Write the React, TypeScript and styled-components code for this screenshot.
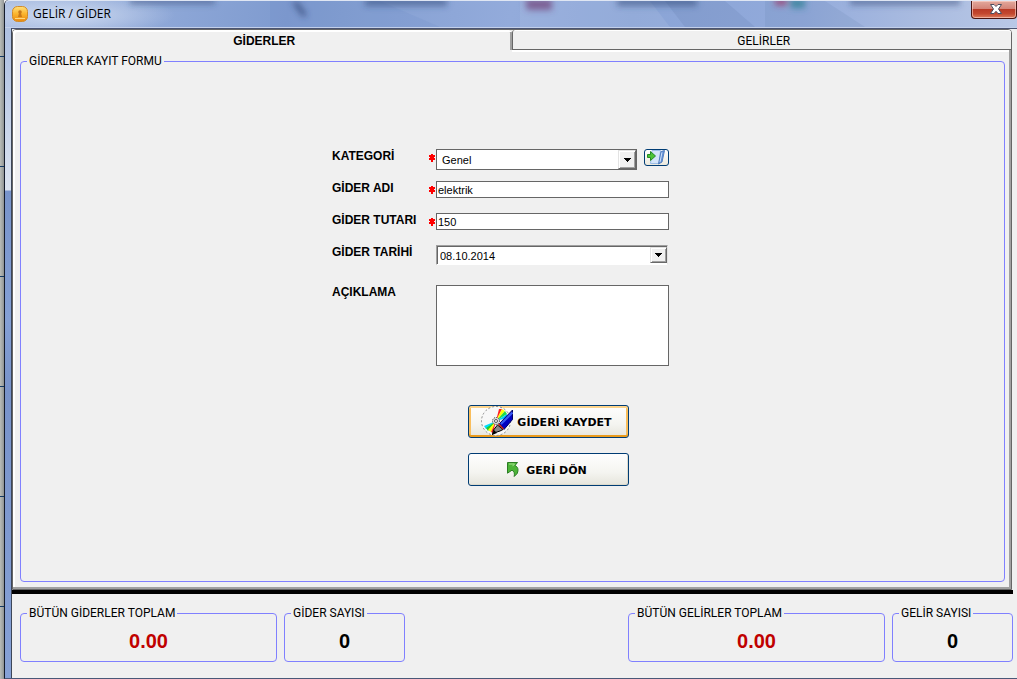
import React from "react";
import styled, { createGlobalStyle } from "styled-components";

const face = "#f0f0f0";
const frame = "#666666";
const shade = "#a0a0a0";
const violet = "#8080ff";
const ui = `Roboto, "Liberation Sans", sans-serif`;
const sans = `"Liberation Sans", Arial, sans-serif`;

const GlobalStyle = createGlobalStyle`
  *, *::before, *::after { box-sizing: border-box; }
  body { margin: 0; background: ${face}; color: #000; font: 12px/16px ${ui}; }
  button, input, select, textarea { font: inherit; color: inherit; margin: 0; }
`;

const Desktop = styled.div`
  display: flex;
  min-height: 100vh;
`;

const Backdrop = styled.div`
  flex: 0 0 4px;
  background:
    repeating-linear-gradient(180deg, transparent 0 56px, #123a66 56px 57px, transparent 57px 110px),
    linear-gradient(90deg, #b9bdb9, #a2a6a4 60%, #8d908f);
`;

const Window = styled.main`
  flex: 1;
  min-width: 0;
  display: flex;
  flex-direction: column;
  border-left: 1px solid #141c2c;
  border-bottom: 1px solid #4a5878;
  border-top-left-radius: 5px;
  background: linear-gradient(180deg, #a9bddf 0, #b4c5e4 60px, #dbe3f0 190px, #7894cb 191px, #84a0d5 320px, #7893ca 390px, #86a1d6 100%);
`;

const TitleBar = styled.header`
  position: relative;
  display: flex;
  align-items: flex-start;
  height: 28px;
  border-top: 1px solid #dfe6f3;
  border-bottom: 1px solid #c3d0ea;
  border-top-left-radius: 5px;
  background:
    radial-gradient(ellipse 110px 22px at 60px 14px, rgba(215, 226, 245, 0.85), transparent),
    linear-gradient(100deg, #a5b9de 0, #8ba5d6 18%, #7f9bcf 28%, #93abdb 50%, #8aa4d6 62%, #92aadb 78%, #a9bbe0 90%, #b9c8e6 100%);
  overflow: hidden;
`;

const Reflections = styled.svg`
  position: absolute;
  inset: 0;
  width: 100%;
  height: 100%;
`;

const Title = styled.h1`
  position: relative;
  flex: 1;
  display: flex;
  align-items: center;
  gap: 5px;
  margin: 0;
  padding: 4px 0 0 7px;
  font: 400 12px/18px "Open Sans", "Noto Sans", sans-serif;
`;

const CloseButton = styled.button`
  position: relative;
  display: flex;
  align-items: center;
  justify-content: center;
  width: 46px;
  height: 18px;
  padding: 0 0 2px 3px;
  border: 1px solid #4a1512;
  border-top: 0;
  border-radius: 0 0 4px 4px;
  background: linear-gradient(180deg, #e3a99d 0, #d48478 45%, #b93a26 50%, #c4482f 75%, #dd7c5c 100%);
  box-shadow: inset 0 0 0 1px rgba(255, 215, 205, 0.6);
`;

const Client = styled.div`
  flex: 1;
  display: flex;
  flex-direction: column;
  margin-left: 6px;
  border-left: 1px solid #3d4658;
  border-top: 1px solid #4a5472;
  background: ${face};
`;

const TabControl = styled.section`
  flex: 1;
  display: flex;
  flex-direction: column;
  margin-right: 5px;
  border: 1px solid ${frame};
  border-radius: 4px 4px 0 0;
`;

const Tabs = styled.div`
  display: flex;
`;

const Tab = styled.button<{ $active?: boolean }>`
  flex: 1;
  height: 20px;
  padding: 2px 0 0 4px;
  border: 0 solid ${frame};
  border-width: ${(p) => (p.$active ? "0" : "0 0 1px 1px")};
  border-radius: 3px 3px 0 0;
  background: ${face};
  font: ${(p) => (p.$active ? `700 12px/18px ${sans}` : `400 12px/18px ${ui}`)};
  box-shadow: ${(p) =>
    p.$active
      ? `inset 2px 2px 0 #fff, inset -2px 0 0 ${shade}`
      : "inset 0 1px 0 #fff, 0 2px 0 #fff"};
`;

const Pane = styled.div`
  flex: 1;
  display: flex;
  padding: 4px 4px 5px 7px;
  border: solid ${shade};
  border-width: 0 2px 2px 0;
  box-shadow: inset 2px 0 0 #fff;
`;

const Group = styled.fieldset<{ $width?: number }>`
  flex: ${(p) => (p.$width ? `0 0 ${p.$width}px` : "1")};
  min-width: 0;
  margin: 0;
  padding: 0;
  border: 1px solid ${violet};
  border-radius: 4px;
`;

const Legend = styled.legend`
  margin-left: 6px;
  padding: 0 2px;
  line-height: 15px;
`;

const Form = styled.form`
  display: flex;
  flex-direction: column;
  align-items: center;
  padding: 79px 24px 0 0;
`;

const Fields = styled.div`
  display: grid;
  grid-template-columns: 97px 7px 233px;
  grid-template-rows: 32px 32px 32px 40px auto;
  align-items: start;
`;

const Label = styled.label`
  grid-column: 1;
  font: 700 12px/16px ${sans};
`;

const Star = styled.svg`
  grid-column: 2;
  width: 7px;
  height: 8px;
  margin-top: 6px;
`;

const Control = styled.div`
  grid-column: 3;
  display: flex;
  align-items: flex-start;
  justify-content: space-between;
  padding-top: 1px;
`;

const TextBox = styled.input`
  width: 100%;
  height: 17px;
  padding: 0 1px;
  border: 1px solid ${frame};
  border-radius: 0;
  background: #fff;
  font: 11px/15px ${sans};
  outline: 0;
`;

const Memo = styled.textarea`
  width: 100%;
  height: 81px;
  padding: 2px;
  border: 1px solid ${frame};
  border-radius: 0;
  background: #fff;
  font: 11px/15px ${sans};
  resize: none;
`;

const Combo = styled.div`
  display: flex;
  position: relative;
  width: 201px;
  height: 21px;
  border: 1px solid ${frame};
  background: #fff;
`;

const Select = styled.select`
  width: 100%;
  padding: 1px 5px 0;
  border: 0;
  appearance: none;
  background: transparent;
  font: 11px/18px ${sans};
  outline: 0;
`;

const DateBox = styled.div`
  display: flex;
  width: 232px;
  height: 20px;
  border: 1px solid;
  border-color: ${shade} #e3e3e3 #fff ${shade};
  background: #fff;
  box-shadow: inset 1px 1px 0 ${frame};
`;

const DateInput = styled.input`
  flex: 1;
  min-width: 0;
  padding: 1px 3px 0;
  border: 0;
  background: transparent;
  font: 11px/18px ${sans};
  outline: 0;
`;

const arrow = `
  border: 1px solid;
  border-color: #e3e3e3 #696969 #696969 #e3e3e3;
  background: ${face};
  box-shadow: inset 1px 1px 0 #fff, inset -1px -1px 0 ${shade};
  display: flex;
  align-items: center;
  justify-content: center;
`;

const ComboArrow = styled.span`
  ${arrow}
  position: absolute;
  inset: 0 0 0 auto;
  width: 18px;
  pointer-events: none;
`;

const DateArrow = styled.button`
  ${arrow}
  width: 17px;
  margin: 1px 0;
  padding: 0;
`;

const AddButton = styled.button`
  display: flex;
  justify-content: center;
  width: 25px;
  height: 17px;
  padding: 0;
  border: 1px solid #003c74;
  border-radius: 3px;
  background: linear-gradient(#fff, #ece9dd);
`;

const Actions = styled.div`
  display: flex;
  flex-direction: column;
  gap: 15px;
  margin: 39px 0 0 96px;
`;

const ActionButton = styled.button<{ $primary?: boolean }>`
  display: flex;
  align-items: center;
  justify-content: center;
  gap: ${(p) => (p.$primary ? 4 : 6)}px;
  width: 161px;
  height: 33px;
  padding: 0 4px 0 0;
  border: 1px solid #003c74;
  border-radius: 3px;
  background: linear-gradient(#fefefe, #f4f4f0 60%, #e6e5dc);
  font: 700 11px/16px "DejaVu Sans", Verdana, sans-serif;
  box-shadow: ${(p) =>
    p.$primary
      ? "inset 0 2px 0 #fdd48b, inset 0 -2px 0 #e89a1c, inset 2px 0 0 #f9be5c, inset -2px 0 0 #f9be5c"
      : "inset -1px -1px 0 #dcdacd"};
`;

const Caption = styled.span`
  padding-top: 2px;
`;

const Divider = styled.hr`
  height: 4px;
  margin: 0 4px 0 0;
  border: 0;
  background: #000;
`;

const Footer = styled.footer`
  display: flex;
  justify-content: space-between;
  padding: 12px 4px 16px 8px;
`;

const Totals = styled.div`
  display: flex;
  gap: 7px;
`;

const Value = styled.output<{ $money?: boolean }>`
  display: block;
  padding: 8px 0;
  text-align: center;
  font: 700 20px/24px ${sans};
  color: ${(p) => (p.$money ? "#c00000" : "#000")};
`;

const DownGlyph = () => (
  <svg width="7" height="4" viewBox="0 0 7 4" shapeRendering="crispEdges" aria-hidden>
    <path d="M0 0h7v1H6v1H5v1H4v1H3V3H2V2H1V1H0z" />
  </svg>
);

const Required = () => (
  <Star viewBox="0 0 7 8" shapeRendering="crispEdges" aria-hidden>
    <path d="M2 0h2v1h2v2H5v1h1v2H4v2H2V6H0V4h1V3H0V1h2z" fill="#f00" />
  </Star>
);

const AppIcon = () => (
  <svg width="16" height="16" viewBox="0 0 16 16" aria-hidden>
    <defs>
      <linearGradient id="amber" x1="0" y1="0" x2="0" y2="1">
        <stop offset="0" stopColor="#ffe07c" />
        <stop offset=".5" stopColor="#fbb42c" />
        <stop offset="1" stopColor="#e9890f" />
      </linearGradient>
    </defs>
    <rect x=".5" y=".5" width="15" height="15" rx="5" fill="url(#amber)" stroke="#d08c2c" />
    <circle cx="8" cy="6" r="1.8" fill="#c9791a" />
    <path d="M7 7h2l1 4H6z" fill="#c9791a" />
    <path d="M3 12.5h10" stroke="#ffd880" />
  </svg>
);

const FolderIcon = () => (
  <svg width="21" height="15" viewBox="0 0 21 15" aria-hidden>
    <path d="M6 .5h8.500l-1.500 13H4.500z" fill="#d4e5fa" stroke="#9cbde6" />
    <path d="M15 1.500l3.500-1-2.500 11.500-3.500 2z" fill="#5f8fd6" stroke="#5580c0" />
    <path d="M15.500 2.500l1-.3-2 9.500-1 .6z" fill="#d9e8fb" />
    <path d="M1.500 4.500h3V1.500L9.500 6l-5 4.500v-3h-3z" fill="#4cc436" stroke="#258a25" />
  </svg>
);

const DiscPenIcon = () => (
  <svg width="32" height="31" viewBox="0 0 32 31" aria-hidden>
    <circle cx="15" cy="15" r="14.5" fill="#f8f8f8" stroke="#888" strokeDasharray="2 2" />
    <path d="M15 15L18 3l3 0z" fill="#f22" />
    <path d="M15 15l6-12 3 2z" fill="#ff0" />
    <path d="M15 15l9-10 2 3z" fill="#2d4" />
    <path d="M15 15L26 8l0 4z" fill="#0cf" />
    <path d="M15 15L3 20l2 3z" fill="#0df" />
    <path d="M15 15L5 22l2 3z" fill="#2c3" />
    <path d="M15 15L7 24l3 2z" fill="#ff0" />
    <path d="M15 15l-5 11 2 1z" fill="#f22" />
    <circle cx="15" cy="15" r="3.5" fill="#ddd" stroke="#333" strokeDasharray="1 1" />
    <circle cx="15" cy="15" r="1.5" fill="#fff" stroke="#555" />
    <path d="M18.500 17.500L31.500 4v9.500L23 23.500z" fill="#0000c0" stroke="#000060" />
    <path d="M20 18L31.500 6.500" stroke="#3a5cf0" strokeWidth="2" />
    <path d="M16.500 19l5.500 4.500-3 1.500-6 2-1.500 1.500 1-4.500z" fill="#888" stroke="#000" />
    <path d="M11 29l2-5 3 3z" fill="#000" />
    <path d="M17.500 18l5 5" stroke="#c01818" strokeWidth="1.5" />
  </svg>
);

const BackIcon = () => (
  <svg width="14" height="16" viewBox="0 0 14 16" aria-hidden>
    <path d="M1.500.5h10L9 3.500c3 1.600 3.800 3.800 2.200 8l-3 3c.6-3.500 0-5-2.200-6.300l-4.500 3z" fill="#4cb437" stroke="#2b7d23" />
    <path d="M3 2h5.500L6.500 4.200" fill="none" stroke="#a5e38d" />
  </svg>
);

const Total = ({ title, value, width, money }: { title: string; value: string; width: number; money?: boolean }) => (
  <Group $width={width}>
    <Legend>{title}</Legend>
    <Value $money={money}>{value}</Value>
  </Group>
);

export default function App() {
  return (
    <>
      <GlobalStyle />
      <Desktop>
        <Backdrop />
        <Window>
          <TitleBar>
            <Reflections viewBox="0 0 1012 26" preserveAspectRatio="none" aria-hidden>
              <defs>
                <filter id="soft" x="-20%" y="-100%" width="140%" height="300%">
                  <feGaussianBlur stdDeviation="3" />
                </filter>
              </defs>
              <path d="M265 0h110l60 26H265z" fill="#6684c0" opacity=".15" />
              <path d="M515 0h130l20 26H515z" fill="#fff" opacity=".08" />
              <path d="M660 0h60l30 26h-70z" fill="#54719f" opacity=".16" />
              <path d="M760 0h60l40 26H760z" fill="#54719f" opacity=".13" />
              <g filter="url(#soft)" fill="#2c4170">
                <path d="M125 -3h85v6h-85zM360 -3h82v8h-82zM612 -3h80v8h-80zM845 -3h110v7H845z" opacity=".5" />
                <path d="M287 1l6 0 9 13-4 2z" opacity=".75" />
                <path d="M520 -2h27v11h-25z" fill="#713f77" opacity=".7" />
                <path d="M770 -2h12v6h-12z" fill="#a02d5c" opacity=".8" />
                <path d="M784 -2h16v9h-14z" fill="#2f8196" opacity=".8" />
              </g>
            </Reflections>
            <Title>
              <AppIcon />
              GELİR / GİDER
            </Title>
            <CloseButton type="button" aria-label="Kapat">
              <svg width="12" height="10" viewBox="0 0 12 10" aria-hidden>
                <path d="M.5.500h3.500l2 2 2-2h3.500L8.500 5l3 4.500H8L6 7.300 4 9.500H.5L3.500 5z" fill="#fff" stroke="#4b4e60" />
              </svg>
            </CloseButton>
          </TitleBar>
          <Client>
            <TabControl>
              <Tabs role="tablist">
                <Tab type="button" role="tab" aria-selected="true" $active>GİDERLER</Tab>
                <Tab type="button" role="tab" aria-selected="false">GELİRLER</Tab>
              </Tabs>
              <Pane role="tabpanel">
                <Group>
                  <Legend>GİDERLER KAYIT FORMU</Legend>
                  <Form onSubmit={(e) => e.preventDefault()}>
                    <Fields>
                      <Label htmlFor="kategori">KATEGORİ</Label>
                      <Required />
                      <Control>
                        <Combo>
                          <Select id="kategori" defaultValue="Genel">
                            <option>Genel</option>
                          </Select>
                          <ComboArrow><DownGlyph /></ComboArrow>
                        </Combo>
                        <AddButton type="button" aria-label="Kategori ekle"><FolderIcon /></AddButton>
                      </Control>
                      <Label htmlFor="adi">GİDER ADI</Label>
                      <Required />
                      <Control><TextBox id="adi" defaultValue="elektrik" /></Control>
                      <Label htmlFor="tutar">GİDER TUTARI</Label>
                      <Required />
                      <Control><TextBox id="tutar" defaultValue="150" /></Control>
                      <Label htmlFor="tarih">GİDER TARİHİ</Label>
                      <Control>
                        <DateBox>
                          <DateInput id="tarih" defaultValue="08.10.2014" />
                          <DateArrow type="button" aria-label="Takvim"><DownGlyph /></DateArrow>
                        </DateBox>
                      </Control>
                      <Label htmlFor="aciklama">AÇIKLAMA</Label>
                      <Control><Memo id="aciklama" /></Control>
                    </Fields>
                    <Actions>
                      <ActionButton type="submit" $primary>
                        <DiscPenIcon />
                        <Caption>GİDERİ KAYDET</Caption>
                      </ActionButton>
                      <ActionButton type="button">
                        <BackIcon />
                        <Caption>GERİ DÖN</Caption>
                      </ActionButton>
                    </Actions>
                  </Form>
                </Group>
              </Pane>
            </TabControl>
            <Divider />
            <Footer>
              <Totals>
                <Total title="BÜTÜN GİDERLER TOPLAM" value="0.00" width={257} money />
                <Total title="GİDER SAYISI" value="0" width={121} />
              </Totals>
              <Totals>
                <Total title="BÜTÜN GELİRLER TOPLAM" value="0.00" width={257} money />
                <Total title="GELİR SAYISI" value="0" width={121} />
              </Totals>
            </Footer>
          </Client>
        </Window>
      </Desktop>
    </>
  );
}
